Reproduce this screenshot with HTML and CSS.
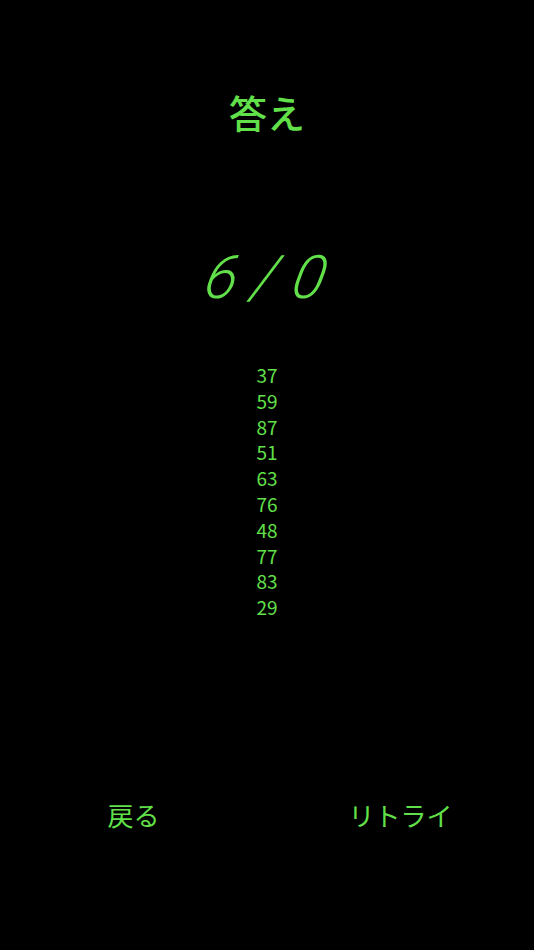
FILE: index.html
```html
<!DOCTYPE html>
<html lang="ja">
<head>
<meta charset="utf-8">
<link rel="stylesheet" href="styles.css">
</head>
<body>
<div class="screen">
  <h1 class="title">答え</h1>
  <div class="score">6/0</div>
  <ul class="answers">
    <li>37</li><li>59</li><li>87</li><li>51</li><li>63</li>
    <li>76</li><li>48</li><li>77</li><li>83</li><li>29</li>
  </ul>
  <div class="actions">
    <button class="btn">戻る</button>
    <button class="btn">リトライ</button>
  </div>
</div>
</body>
</html>
```
FILE: styles.css
```css
html, body {
  margin: 0;
  padding: 0;
  background: #000;
}
.screen {
  width: 534px;
  height: 950px;
  display: flex;
  flex-direction: column;
  align-items: center;
  color: #62e04a;
  font-family: "Noto Sans CJK JP", "Noto Sans", sans-serif;
}
.title {
  margin: 84px 0 0;
  font-size: 38px;
  font-weight: 500;
  line-height: 56px;
}
.score {
  margin-top: 98px;
  padding-left: 14px;
  font-family: Roboto, "Noto Sans", sans-serif;
  font-weight: 300;
  font-style: italic;
  font-size: 60px;
  line-height: 80px;
  letter-spacing: 16px;
  transform: skewX(-12deg);
}
.answers {
  list-style: none;
  margin: 44px 0 0;
  padding: 0;
  text-align: center;
  font-size: 19px;
  line-height: 25.8px;
}
.actions {
  margin-top: 175px;
  width: 100%;
  display: grid;
  grid-template-columns: 1fr 1fr;
}
.btn {
  background: none;
  border: none;
  color: #62e04a;
  font-family: "Noto Sans CJK JP", sans-serif;
  font-size: 26px;
  line-height: 40px;
  padding: 0;
  cursor: pointer;
}
```
